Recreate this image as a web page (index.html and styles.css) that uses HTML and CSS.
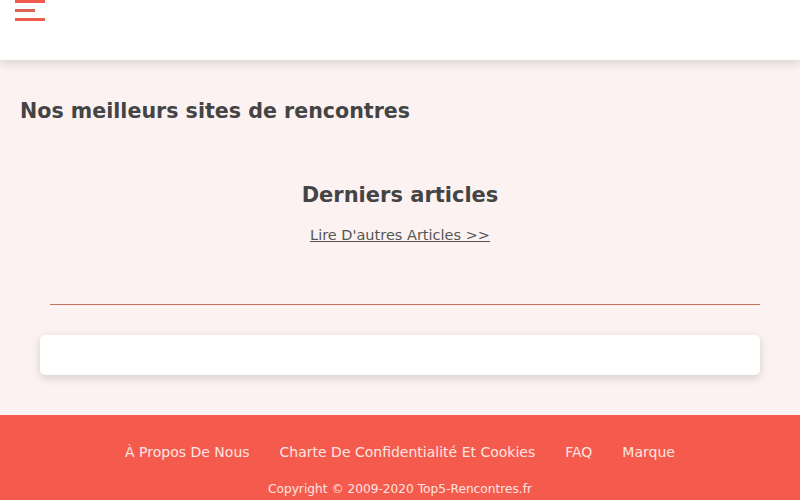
FILE: index.html
```html
<!DOCTYPE html>
<html lang="fr">
<head>
  <meta charset="UTF-8" />
  <meta name="viewport" content="width=device-width, initial-scale=1.0" />
  <title>Top5 Rencontres</title>
  <link rel="stylesheet" href="styles.css">
</head>
<body>
  <header class="topbar">
    <div class="burger" aria-label="Menu">
      <span class="bar"></span>
      <span class="bar short"></span>
      <span class="bar"></span>
    </div>
  </header>

  <main class="page">
    <h1 class="title">Nos meilleurs sites de rencontres</h1>

    <section class="articles">
      <h2>Derniers articles</h2>
      <a href="#" class="more">Lire D'autres Articles &gt;&gt;</a>
    </section>

    <hr class="divider">

    <div class="card"></div>
  </main>

  <footer class="footer">
    <nav class="links">
      <a href="#">À Propos De Nous</a>
      <a href="#">Charte De Confidentialité Et Cookies</a>
      <a href="#">FAQ</a>
      <a href="#">Marque</a>
    </nav>
    <p class="copy">Copyright © 2009-2020 Top5-Rencontres.fr</p>
  </footer>
</body>
</html>
```

FILE: styles.css
```css
body {
  margin: 0;
  background: #fcf2f1;
  color: #444;
  font-family: "DejaVu Sans", sans-serif;
}
.topbar {
  height: 60px;
  background: #fff;
  box-shadow: 0 3px 10px rgba(0, 0, 0, 0.15);
  position: relative;
  z-index: 1;
}
.burger {
  display: flex;
  flex-direction: column;
  align-items: flex-start;
  gap: 6px;
  padding-left: 15px;
}
.bar {
  display: block;
  width: 30px;
  height: 3px;
  background: #f05a4a;
}
.bar.short {
  width: 20px;
  background: #dc6352;
}
.page {
  padding: 39px 20px 40px;
}
.title {
  margin: 0;
  font-size: 20.6px;
  line-height: 24px;
  color: #444;
}
.articles {
  text-align: center;
  margin-top: 59px;
}
.articles h2 {
  margin: 0;
  font-size: 21px;
  line-height: 26px;
}
.more {
  display: inline-block;
  margin-top: 19px;
  font-size: 14.5px;
  color: #555;
}
.divider {
  margin: 60px 20px 0 30px;
  border: none;
  border-top: 1px solid #c8705f;
}
.card {
  margin: 30px 20px 0;
  height: 40px;
  background: #fff;
  border-radius: 5px;
  box-shadow: 0 3px 10px rgba(0, 0, 0, 0.15);
}
.footer {
  background: #f55b4d;
  text-align: center;
  padding: 29px 0 10px;
}
.links {
  display: flex;
  justify-content: center;
  gap: 30px;
}
.links a {
  color: #fde5e1;
  text-decoration: none;
  font-size: 14px;
}
.copy {
  margin: 22px 0 0;
  font-size: 12.2px;
  color: #fde5e1;
}
```
